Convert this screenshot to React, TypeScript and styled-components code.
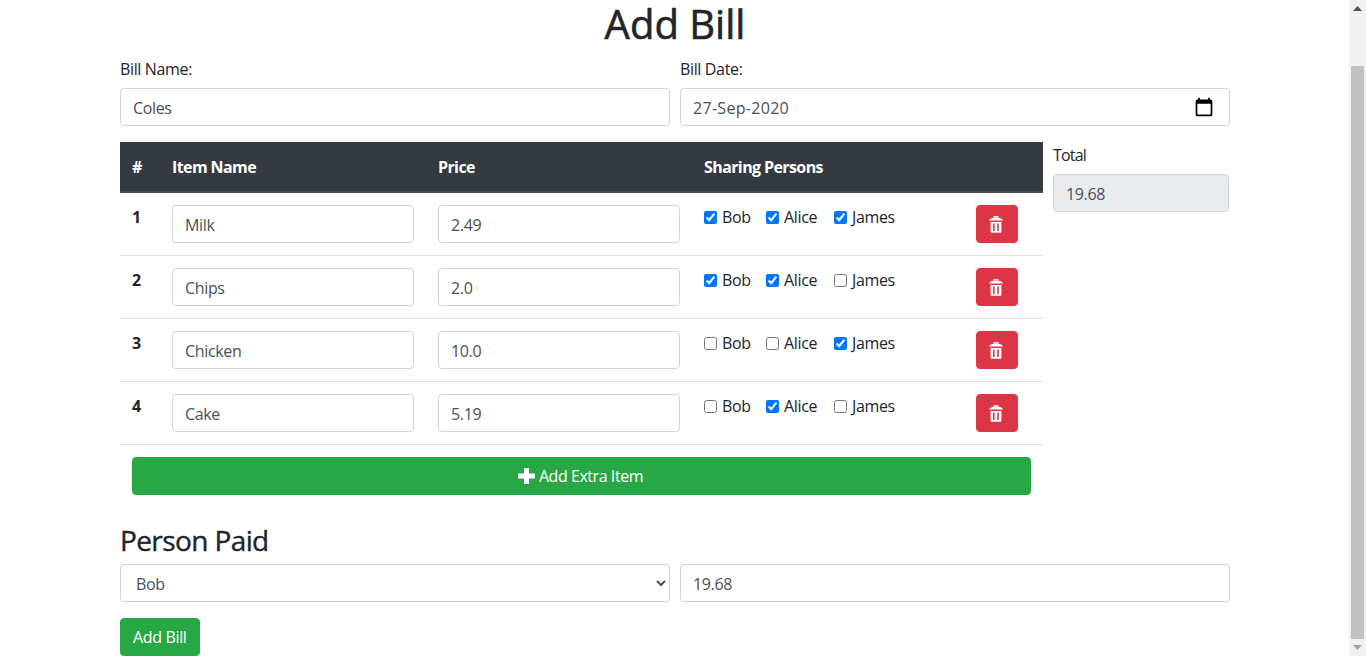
import React from "react";
import styled, { createGlobalStyle } from "styled-components";

const GlobalStyle = createGlobalStyle`
  html, body {
    margin: 0;
    height: 100%;
    overflow: hidden;
  }
  body {
    font-family: "Open Sans", "Noto Sans", sans-serif;
    font-size: 16px;
    line-height: 24px;
    letter-spacing: -0.35px;
    color: #212529;
    background: #fff;
  }
  * {
    box-sizing: border-box;
  }
`;

const Shell = styled.div`
  display: flex;
  width: 1366px;
  height: 656px;
  overflow: hidden;
`;

const Page = styled.main`
  flex: 1;
  min-width: 0;
  padding: 0 119px 0 120px;
`;

const Title = styled.h1`
  margin: 0 0 8px;
  height: 48px;
  font-size: 40px;
  line-height: 48px;
  font-weight: 500;
  letter-spacing: 0;
  text-align: center;
  -webkit-text-stroke: 0.6px #212529;
`;

const TwoCols = styled.div`
  display: grid;
  grid-template-columns: 550px 550px;
  gap: 10px;
  margin-bottom: 16px;
`;

const Field = styled.div`
  display: flex;
  flex-direction: column;
`;

const Label = styled.label`
  display: block;
  height: 25px;
  margin-bottom: 7px;
  padding-top: 1px;
`;

const Input = styled.input`
  display: block;
  width: 100%;
  height: 38px;
  padding: 7px 12px 5px;
  border: 1px solid #ced4da;
  border-radius: 4px;
  font: inherit;
  letter-spacing: inherit;
  color: #495057;
  background: ${(p) => (p.readOnly ? "#e9ecef" : "#fff")};
  outline: none;
`;

const DateBox = styled.div`
  display: flex;
  align-items: center;
  justify-content: space-between;
  height: 38px;
  padding: 0 15px 0 12px;
  border: 1px solid #ced4da;
  border-radius: 4px;
  color: #495057;

  span {
    padding-top: 1px;
    letter-spacing: 0.3px;
  }
`;

const Select = styled.select`
  display: block;
  width: 100%;
  height: 38px;
  padding: 7px 11px 5px;
  border: 1px solid #ced4da;
  border-radius: 4px;
  font: inherit;
  letter-spacing: inherit;
  color: #495057;
  background: #fff;
  outline: none;
`;

const ItemsRow = styled.div`
  display: flex;
  gap: 10px;
`;

const ItemsTable = styled.table`
  width: 923px;
  flex: none;
  table-layout: fixed;
  border-collapse: collapse;
`;

const HeadCell = styled.th`
  height: 50px;
  padding: 13px 12px 11px;
  background: #343a40;
  border-bottom: 2px solid #454d55;
  color: #fff;
  font-weight: 700;
  letter-spacing: -0.6px;
  text-align: left;
  vertical-align: top;
`;

const BodyRow = styled.tr`
  border-bottom: 1px solid #dee2e6;
`;

const Cell = styled.td`
  padding: 12px;
  vertical-align: top;
`;

const RowNumber = styled(Cell)`
  font-weight: 700;
`;

const Sharing = styled.div`
  display: flex;
`;

const Person = styled.label<{ $w: number }>`
  display: flex;
  align-items: center;
  width: ${(p) => p.$w}px;
  height: 24px;

  input {
    width: 13px;
    height: 13px;
    margin: 0 5px 0 0;
    flex: none;
  }
`;

const Button = styled.button<{ $bg: string }>`
  display: inline-flex;
  align-items: center;
  justify-content: center;
  height: 38px;
  padding: 0 12px;
  border: 1px solid ${(p) => p.$bg};
  border-radius: 4px;
  background: ${(p) => p.$bg};
  color: #fff;
  font: inherit;
  letter-spacing: inherit;
`;

const DeleteButton = styled(Button)`
  width: 42px;
  padding: 0 2px 0 0;
`;

const AddItemButton = styled(Button)`
  width: 100%;
  gap: 4px;
  padding-right: 14px;
  letter-spacing: -0.45px;
`;

const TotalCol = styled.div`
  width: 176px;
  flex: none;
`;

const TotalLabel = styled.label`
  display: block;
  margin-bottom: 7px;
  padding-top: 1px;
  letter-spacing: -0.8px;
`;

const SubTitle = styled.h3`
  margin: 16px 0 7px;
  font-size: 28px;
  line-height: 34px;
  font-weight: 500;
  letter-spacing: -0.6px;
  -webkit-text-stroke: 0.4px #212529;
`;

const Scrollbar = styled.div`
  display: flex;
  flex: none;
  flex-direction: column;
  align-items: center;
  width: 17px;
  background: #f1f1f1;
`;

const ArrowSlot = styled.div`
  display: flex;
  align-items: center;
  justify-content: center;
  height: 17px;
  flex: none;
`;

const Track = styled.div`
  flex: 1;
  display: flex;
  flex-direction: column;
  justify-content: flex-end;
  width: 100%;
  padding: 0 2px;
`;

const Thumb = styled.div`
  height: 573px;
  background: #c1c1c1;
`;

type Item = { name: string; price: string; shared: [boolean, boolean, boolean] };

const items: Item[] = [
  { name: "Milk", price: "2.49", shared: [true, true, true] },
  { name: "Chips", price: "2.0", shared: [true, true, false] },
  { name: "Chicken", price: "10.0", shared: [false, false, true] },
  { name: "Cake", price: "5.19", shared: [false, true, false] },
];

const people: [string, number][] = [
  ["Bob", 62],
  ["Alice", 68],
  ["James", 70],
];

const CalendarIcon = () => (
  <svg width="20" height="20" viewBox="0 0 24 24" fill="#000">
    <path d="M20 3h-1V1h-2v2H7V1H5v2H4c-1.1 0-2 .9-2 2v16c0 1.1.9 2 2 2h16c1.1 0 2-.9 2-2V5c0-1.1-.9-2-2-2zm0 18H4V8h16v13z" />
  </svg>
);

const TrashIcon = () => (
  <svg width="14" height="17" viewBox="0 0 14 17" fill="#fff">
    <path d="M5 0h4l1 1.5H4z" />
    <path d="M0 4.6C.6 2.4 3 1.5 7 1.5s6.4.9 7 3.1z" />
    <path
      fillRule="evenodd"
      d="M1.6 6h10.8v9.6q0 1.2-1.2 1.2H2.8q-1.2 0-1.2-1.2zM4 7.6v7.4h1.6V7.6zM8.2 7.6v7.4h1.6V7.6z"
    />
  </svg>
);

const PlusIcon = () => (
  <svg width="17" height="16" viewBox="0 0 17 16" fill="#fff">
    <path d="M6 0h5v5.5h6v5h-6V16H6v-5.5H0v-5h6z" />
  </svg>
);

const App = () => {
  return (
    <Shell>
      <GlobalStyle />
      <Page>
        <Title>Add Bill</Title>
        <TwoCols>
          <Field>
            <Label>Bill Name:</Label>
            <Input defaultValue="Coles" />
          </Field>
          <Field>
            <Label>Bill Date:</Label>
            <DateBox>
              <span>27-Sep-2020</span>
              <CalendarIcon />
            </DateBox>
          </Field>
        </TwoCols>

        <ItemsRow>
          <ItemsTable>
            <colgroup>
              <col width="40" />
              <col width="266" />
              <col width="266" />
              <col width="272" />
              <col width="79" />
            </colgroup>
            <thead>
              <tr>
                <HeadCell>#</HeadCell>
                <HeadCell>Item Name</HeadCell>
                <HeadCell>Price</HeadCell>
                <HeadCell>Sharing Persons</HeadCell>
                <HeadCell />
              </tr>
            </thead>
            <tbody>
              {items.map((item, i) => (
                <BodyRow key={item.name}>
                  <RowNumber>{i + 1}</RowNumber>
                  <Cell>
                    <Input defaultValue={item.name} />
                  </Cell>
                  <Cell>
                    <Input defaultValue={item.price} />
                  </Cell>
                  <Cell>
                    <Sharing>
                      {people.map(([name, w], p) => (
                        <Person key={name} $w={w}>
                          <input type="checkbox" defaultChecked={item.shared[p]} />
                          {name}
                        </Person>
                      ))}
                    </Sharing>
                  </Cell>
                  <Cell>
                    <DeleteButton $bg="#dc3545">
                      <TrashIcon />
                    </DeleteButton>
                  </Cell>
                </BodyRow>
              ))}
              <tr>
                <Cell colSpan={5}>
                  <AddItemButton $bg="#28a745">
                    <PlusIcon />
                    Add Extra Item
                  </AddItemButton>
                </Cell>
              </tr>
            </tbody>
          </ItemsTable>
          <TotalCol>
            <TotalLabel>Total</TotalLabel>
            <Input readOnly defaultValue="19.68" />
          </TotalCol>
        </ItemsRow>

        <SubTitle>Person Paid</SubTitle>
        <TwoCols>
          <Select defaultValue="Bob">
            <option>Bob</option>
            <option>Alice</option>
            <option>James</option>
          </Select>
          <Input defaultValue="19.68" />
        </TwoCols>
        <Button $bg="#28a745">Add Bill</Button>
      </Page>

      <Scrollbar>
        <ArrowSlot>
          <svg width="9" height="5" viewBox="0 0 9 5" fill="#505050">
            <path d="M4.5 0L9 5H0z" />
          </svg>
        </ArrowSlot>
        <Track>
          <Thumb />
        </Track>
        <ArrowSlot>
          <svg width="9" height="5" viewBox="0 0 9 5" fill="#a3a3a3">
            <path d="M0 0h9L4.5 5z" />
          </svg>
        </ArrowSlot>
      </Scrollbar>
    </Shell>
  );
};

export default App;
